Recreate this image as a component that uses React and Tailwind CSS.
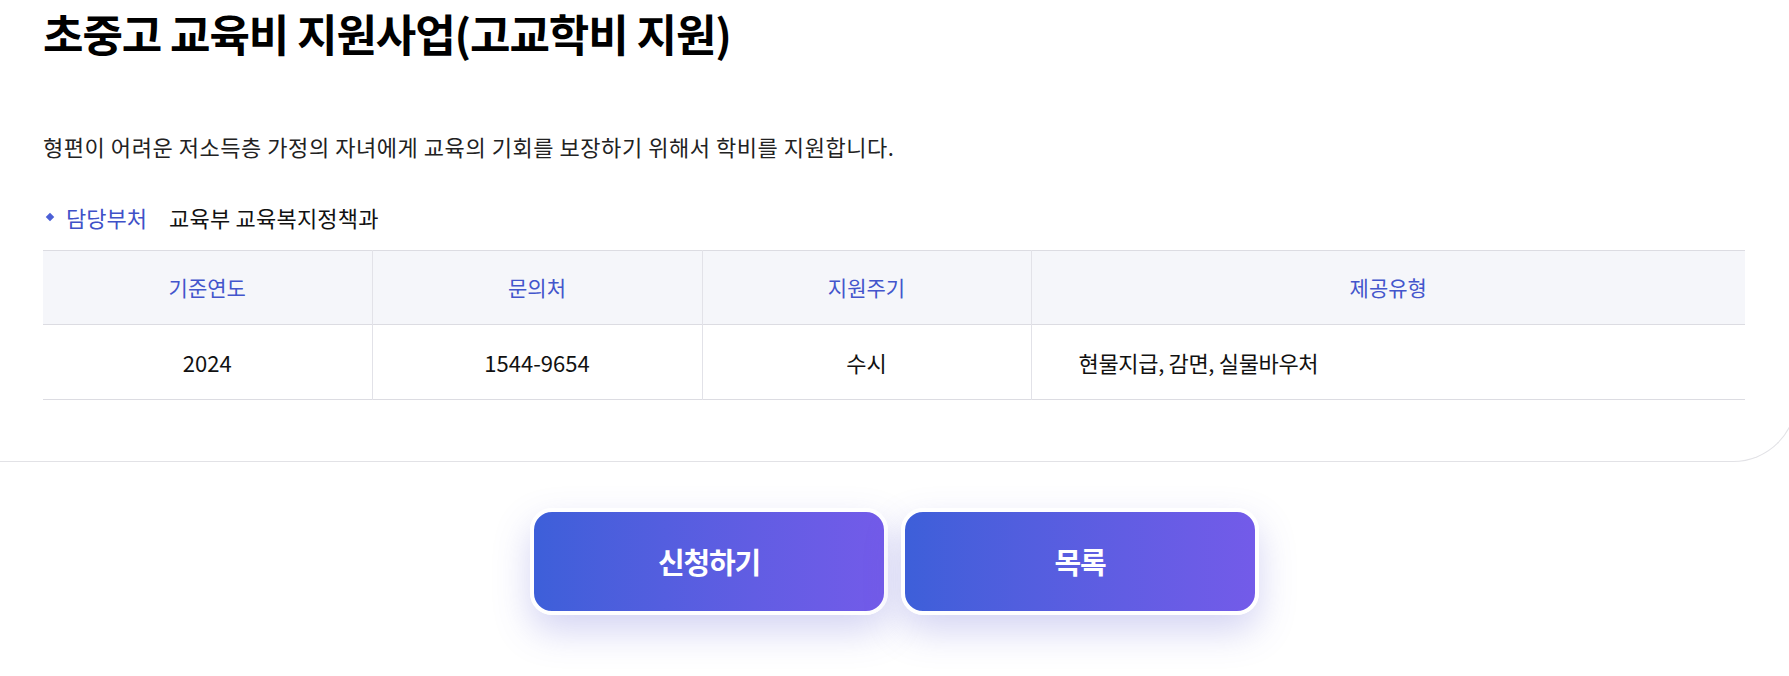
import React from 'react'

const cols = ['기준연도', '문의처', '지원주기', '제공유형']

function ActionButton({ children }) {
  return (
    <button
      type="button"
      className="w-[358px] h-[107px] rounded-[22px] border-4 border-white bg-gradient-to-r from-[#3d5fd9] to-[#735be9] text-white text-[29px] font-bold tracking-[-0.04em] shadow-[0_16px_36px_rgba(90,90,210,0.26)]"
    >
      {children}
    </button>
  )
}

export default function App() {
  return (
    <div className="w-full min-h-[676px] overflow-hidden bg-white font-['Noto_Sans_CJK_KR','Noto_Sans',sans-serif] text-[#111]">
      <div className="-mr-2 border-b border-r border-[#e2e2e6] rounded-br-[64px] pl-[43px] pr-[51px] pb-[61px] pt-[7px]">
        <h1 className="text-[44px] leading-[52px] font-bold tracking-[-0.025em] text-black">
          초중고 교육비 지원사업(고교학비 지원)
        </h1>

        <p className="mt-[72px] text-[22px] leading-[30px] tracking-[0.025em] text-[#222]">
          형편이 어려운 저소득층 가정의 자녀에게 교육의 기회를 보장하기 위해서 학비를 지원합니다.
        </p>

        <div className="mt-[41px] flex items-center text-[22px] leading-[30px]">
          <span className="ml-[4px] mr-[13px] block w-[6px] h-[6px] rotate-45 bg-[#4b5fd6]" />
          <span className="text-[#3f51c8]">담당부처</span>
          <span className="ml-[22px] text-[#111] tracking-[0.01em]">교육부 교육복지정책과</span>
        </div>

        <table className="mt-[18px] w-full border-collapse">
          <colgroup>
            <col className="w-[329px]" />
            <col className="w-[330px]" />
            <col className="w-[329px]" />
            <col />
          </colgroup>
          <thead>
            <tr className="h-[74px] bg-[#f5f6fa] border-t border-[#dcdce2] text-[21px]">
              {cols.map((c, i) => (
                <th
                  key={c}
                  className={`font-normal text-[#4355cc] text-center ${i > 0 ? 'border-l border-[#e2e2e8]' : ''}`}
                >
                  {c}
                </th>
              ))}
            </tr>
          </thead>
          <tbody>
            <tr className="h-[75px] border-t border-b border-[#dcdce2] text-[22px] text-[#111]">
              <td className="text-center">2024</td>
              <td className="text-center border-l border-[#e2e2e8]">1544-9654</td>
              <td className="text-center border-l border-[#e2e2e8]">수시</td>
              <td className="pl-[47px] border-l border-[#e2e2e8] tracking-[-0.015em]">현물지급, 감면, 실물바우처</td>
            </tr>
          </tbody>
        </table>
      </div>

      <div className="flex justify-center gap-[13px] pt-[46px] pb-[60px]">
        <ActionButton>신청하기</ActionButton>
        <ActionButton>목록</ActionButton>
      </div>
    </div>
  )
}
